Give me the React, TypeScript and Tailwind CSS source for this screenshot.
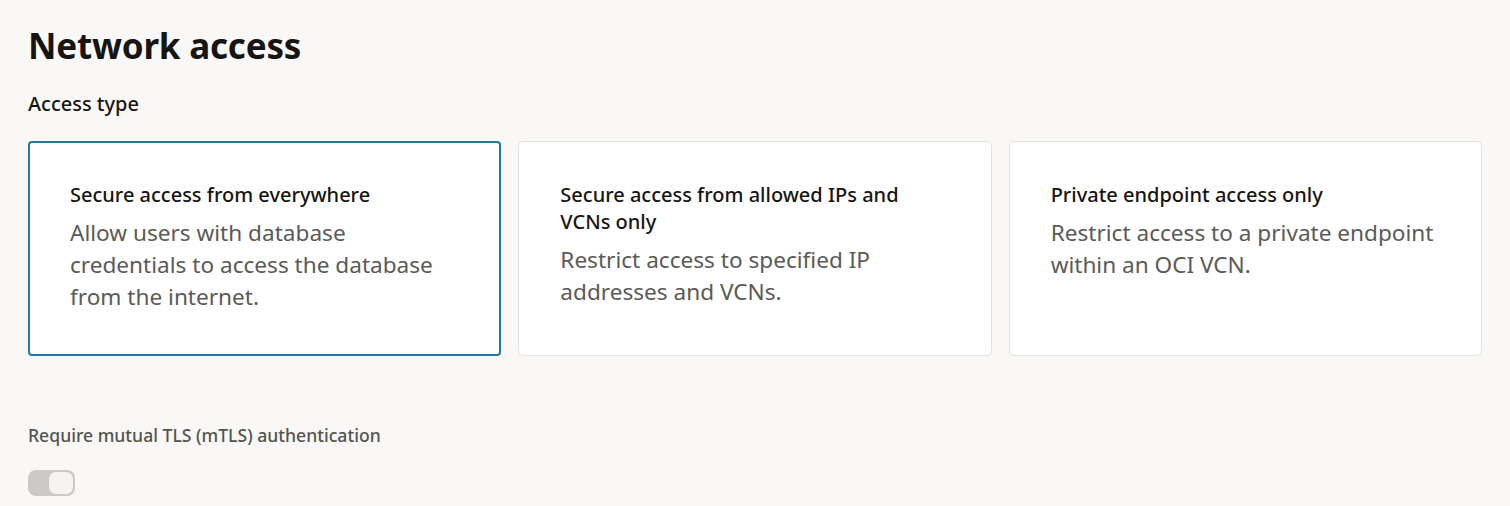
const options = [
  {
    title: 'Secure access from everywhere',
    desc: 'Allow users with database credentials to access the database from the internet.',
    selected: true,
  },
  {
    title: 'Secure access from allowed IPs and VCNs only',
    desc: 'Restrict access to specified IP addresses and VCNs.',
    selected: false,
  },
  {
    title: 'Private endpoint access only',
    desc: 'Restrict access to a private endpoint within an OCI VCN.',
    selected: false,
  },
];

export default function App() {
  return (
    <div className="min-h-[506px] bg-[#f9f8f6] px-[28px] pt-[24px] font-['Noto_Sans',sans-serif] text-[#161513]">
      <h1 className="text-[35px] font-bold leading-[44px] tracking-[-0.2px]">Network access</h1>
      <div className="mt-[23px] text-[20px] font-medium leading-[26px]">Access type</div>
      <div className="mt-[24px] grid grid-cols-3 gap-[17px]">
        {options.map((o) => (
          <div
            key={o.title}
            className={
              o.selected
                ? 'rounded-[4px] border-2 border-[#237b9c] bg-white pl-[40px] pr-[42px] pt-[38px] pb-[41px]'
                : 'rounded-[5px] border border-[#e4e2df] bg-white pl-[41px] pr-[43px] pt-[39px] pb-[42px]'
            }
          >
            <div className="text-[20px] font-medium leading-[27px] text-[#161513]">{o.title}</div>
            <div className="mt-[9px] text-[22.6px] leading-[32px] text-[#5b5a57]">{o.desc}</div>
          </div>
        ))}
      </div>
      <div className="mt-[67px] text-[17.6px] font-medium leading-[24px] text-[#55534f]">
        Require mutual TLS (mTLS) authentication
      </div>
      <div className="mt-[23px] flex h-[26px] w-[47px] items-center justify-end rounded-[8px] bg-[#cbcac8] px-[2px]">
        <div className="h-[22px] w-[24px] rounded-[7px] bg-[#f5f4f2]" />
      </div>
    </div>
  );
}
